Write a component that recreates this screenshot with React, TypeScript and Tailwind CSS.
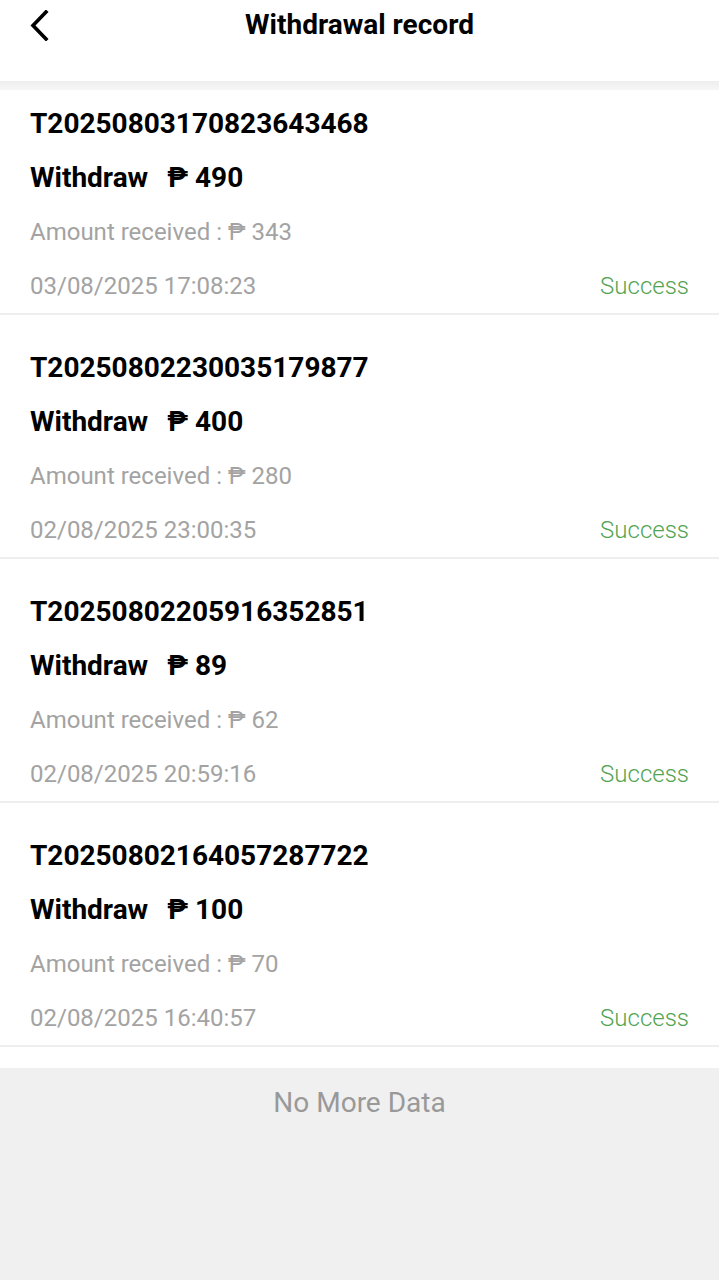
import React from 'react';

interface WithdrawRecord {
  orderNo: string;
  amount: number;
  received: number;
  time: string;
  status: string;
}

const records: WithdrawRecord[] = [
  { orderNo: 'T20250803170823643468', amount: 490, received: 343, time: '03/08/2025 17:08:23', status: 'Success' },
  { orderNo: 'T20250802230035179877', amount: 400, received: 280, time: '02/08/2025 23:00:35', status: 'Success' },
  { orderNo: 'T20250802205916352851', amount: 89, received: 62, time: '02/08/2025 20:59:16', status: 'Success' },
  { orderNo: 'T20250802164057287722', amount: 100, received: 70, time: '02/08/2025 16:40:57', status: 'Success' },
];

const RecordCard: React.FC<{ record: WithdrawRecord; first?: boolean }> = ({ record, first }) => (
  <div className={`${first ? 'pt-[7px]' : 'pt-[26px]'} px-[30px] border-b-2 border-[#eeeeee]`}>
    <div className="h-[54px] flex items-center text-[28px] font-bold text-black">
      {record.orderNo}
    </div>
    <div className="h-[54px] flex items-center text-[28px] font-bold text-black">
      <span>Withdraw</span>
      <span className="ml-[19px]">₱ {record.amount}</span>
    </div>
    <div className="h-[54px] flex items-center text-[24px] text-[#a3a3a3]">
      Amount received : ₱ {record.received}
    </div>
    <div className="h-[54px] flex items-center justify-between text-[24px]">
      <span className="text-[#a3a3a3]">{record.time}</span>
      <span className="text-[#52a452] font-light">{record.status}</span>
    </div>
  </div>
);

const App: React.FC = () => {
  return (
    <div
      className="min-h-[1280px] flex flex-col bg-white"
      style={{ fontFamily: 'Roboto, "Noto Sans", "DejaVu Sans", sans-serif' }}
    >
      {/* Header */}
      <div className="h-[81px] relative flex items-start justify-center bg-white">
        <button className="absolute left-[28px] top-[10px] w-[22px] h-[31px] flex items-center justify-center">
          <svg width="20" height="31" viewBox="0 0 20 31" fill="none">
            <path d="M17 2 L4 15.5 L17 29" stroke="#000" strokeWidth="3.6" strokeLinecap="square" />
          </svg>
        </button>
        <h1 className="mt-[7px] text-[28px] font-bold text-black leading-[36px]">Withdrawal record</h1>
      </div>
      <div className="h-[9px] bg-gradient-to-b from-[#eeeeee] to-[#f6f6f6]" />

      {/* List */}
      <div className="bg-white">
        {records.map((r, i) => (
          <RecordCard key={r.orderNo} record={r} first={i === 0} />
        ))}
      </div>
      <div className="h-[21px] bg-white" />

      {/* Footer */}
      <div className="flex-1 bg-[#f0f0f0]">
        <div className="h-[70px] flex items-center justify-center text-[28px] text-[#999999]">
          No More Data
        </div>
      </div>
    </div>
  );
};

export default App;
